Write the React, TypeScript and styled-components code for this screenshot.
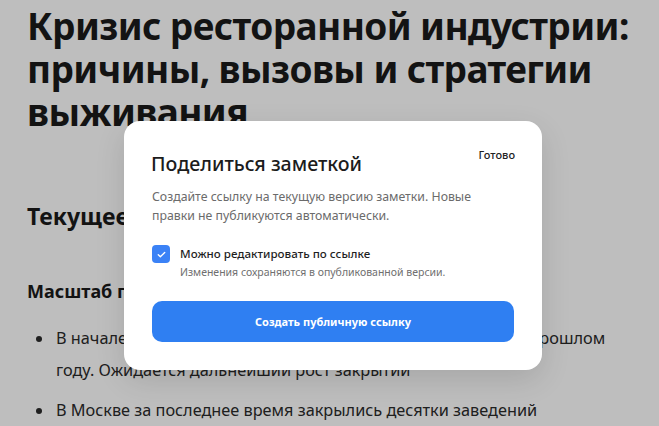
import styled, { createGlobalStyle } from "styled-components";

const GlobalStyle = createGlobalStyle`
  html, body {
    margin: 0;
    padding: 0;
    background: #ffffff;
    overflow: hidden;
  }
  body {
    font-family: "Noto Sans", "Open Sans", Arial, sans-serif;
    color: #1f1f1f;
  }
`;

const Page = styled.div`
  position: relative;
  width: 659px;
  height: 426px;
  overflow: hidden;
`;

const Article = styled.article`
  padding: 0 26px 0 27px;
`;

const Title = styled.h1`
  margin: 0;
  padding-top: 4px;
  font-size: 37px;
  line-height: 43px;
  font-weight: 700;
  color: #1a1a1a;
  letter-spacing: -0.6px;
`;

const Section = styled.h2`
  margin: 67px 0 0;
  font-size: 23px;
  line-height: 32px;
  font-weight: 700;
  color: #1a1a1a;
`;

const Sub = styled.h3`
  margin: 46px 0 0;
  font-size: 18px;
  line-height: 26px;
  font-weight: 700;
  color: #1a1a1a;
`;

const List = styled.ul`
  margin: 18px 15px 0 0;
  padding-left: 27px;
`;

const Item = styled.li`
  font-size: 16.3px;
  line-height: 32px;
  color: #2a2a2a;
  margin-bottom: 8px;
  padding-left: 2px;
`;

const Overlay = styled.div`
  position: absolute;
  inset: 0;
  background: rgba(0, 0, 0, 0.255);
  display: flex;
  justify-content: center;
  align-items: flex-start;
  padding: 121px 0 0 7px;
`;

const Modal = styled.div`
  width: 418px;
  box-sizing: border-box;
  background: #ffffff;
  border-radius: 16px;
  padding: 26px 28px 28px;
  box-shadow: 0 10px 30px rgba(0, 0, 0, 0.12);
`;

const Header = styled.div`
  display: flex;
  justify-content: space-between;
  align-items: flex-start;
`;

const ModalTitle = styled.h2`
  margin: 3px 0 0 -1px;
  font-size: 19.6px;
  line-height: 27px;
  font-weight: 500;
  color: #1c1c1c;
`;

const Done = styled.button`
  border: none;
  background: none;
  padding: 0;
  margin-right: -1px;
  font-family: inherit;
  font-size: 11px;
  line-height: 16px;
  font-weight: 500;
  color: #222;
  cursor: pointer;
`;

const Description = styled.p`
  margin: 10px 0 0;
  font-size: 12.3px;
  line-height: 19px;
  color: #6b6b6b;
`;

const CheckRow = styled.label`
  display: flex;
  gap: 10px;
  margin-top: 20px;
  cursor: pointer;
`;

const Box = styled.span`
  flex: none;
  width: 18px;
  height: 18px;
  border-radius: 4px;
  background: #3b82f6;
  display: flex;
  align-items: center;
  justify-content: center;
`;

const CheckText = styled.div`
  display: flex;
  flex-direction: column;
`;

const CheckLabel = styled.span`
  font-size: 11.6px;
  line-height: 18px;
  font-weight: 500;
  color: #1f1f1f;
`;

const CheckHint = styled.span`
  margin-top: 1px;
  font-size: 10.5px;
  line-height: 17px;
  color: #6f6f6f;
`;

const Primary = styled.button`
  margin-top: 20px;
  width: 100%;
  height: 41px;
  border: none;
  border-radius: 10px;
  background: #2f7ff2;
  color: #ffffff;
  font-family: inherit;
  font-size: 11px;
  font-weight: 700;
  cursor: pointer;
`;

export default function App() {
  return (
    <Page>
      <GlobalStyle />
      <Article>
        <Title>Кризис ресторанной индустрии: причины, вызовы и стратегии выживания</Title>
        <Section>Текущее положение отрасли</Section>
        <Sub>Масштаб проблемы</Sub>
        <List>
          <Item>В начале 2024-го года закрылось больше заведений, чем в прошлом году. Ожидается дальнейший рост закрытий</Item>
          <Item>В Москве за последнее время закрылись десятки заведений</Item>
        </List>
      </Article>
      <Overlay>
        <Modal>
          <Header>
            <ModalTitle>Поделиться заметкой</ModalTitle>
            <Done>Готово</Done>
          </Header>
          <Description>
            Создайте ссылку на текущую версию заметки. Новые правки не публикуются автоматически.
          </Description>
          <CheckRow>
            <Box>
              <svg width="11" height="11" viewBox="0 0 24 24" fill="none" stroke="#fff" strokeWidth="3" strokeLinecap="round" strokeLinejoin="round">
                <path d="M5 12.5l4.5 4.5L19 7.5" />
              </svg>
            </Box>
            <CheckText>
              <CheckLabel>Можно редактировать по ссылке</CheckLabel>
              <CheckHint>Изменения сохраняются в опубликованной версии.</CheckHint>
            </CheckText>
          </CheckRow>
          <Primary>Создать публичную ссылку</Primary>
        </Modal>
      </Overlay>
    </Page>
  );
}
